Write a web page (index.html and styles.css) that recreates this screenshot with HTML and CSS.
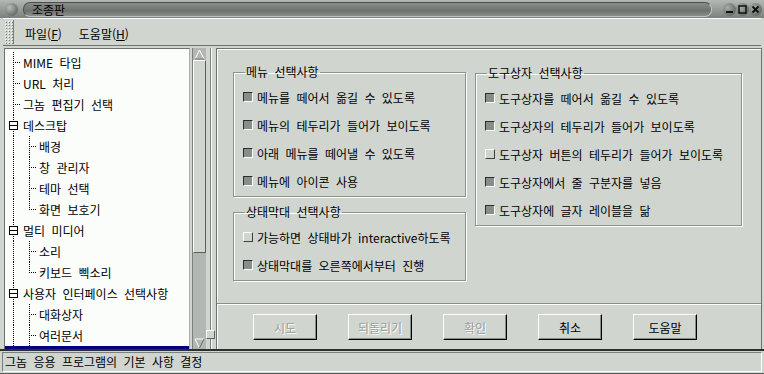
FILE: index.html
```html
<!DOCTYPE html>
<html lang="ko">
<head>
    <meta charset="UTF-8">
    <title>조종판</title>
    <link rel="stylesheet" href="styles.css">
</head>
<body>
<div class="window">

    <div class="titlebar">
        <span class="orb"></span>
        <div class="title-pill">조종판</div>
        <div class="wm-buttons">
            <span class="wm"><svg width="13" height="13" viewBox="0 0 13 13"><rect x="3" y="8" width="7" height="2" fill="#111"/></svg></span>
            <span class="wm"><svg width="13" height="13" viewBox="0 0 13 13"><rect x="3" y="3" width="7" height="7" fill="none" stroke="#111" stroke-width="1.5"/></svg></span>
            <span class="wm"><svg width="13" height="13" viewBox="0 0 13 13"><path d="M3.5 3.5 L9.5 9.5 M9.5 3.5 L3.5 9.5" stroke="#111" stroke-width="2"/></svg></span>
        </div>
    </div>

    <div class="menubar">
        <span class="handle"></span>
        <span class="menu-item">파일(<u>F</u>)</span>
        <span class="menu-item">도움말(<u>H</u>)</span>
    </div>

    <div class="main">
        <div class="tree">
            <div class="row"><span class="g tee"></span><span class="label">MIME 타입</span></div>
            <div class="row"><span class="g tee"></span><span class="label">URL 처리</span></div>
            <div class="row"><span class="g tee"></span><span class="label">그놈 편집기 선택</span></div>
            <div class="row"><span class="g box"><i></i></span><span class="label">데스크탑</span></div>
            <div class="row"><span class="g pass"></span><span class="g tee"></span><span class="label">배경</span></div>
            <div class="row"><span class="g pass"></span><span class="g tee"></span><span class="label">창 관리자</span></div>
            <div class="row"><span class="g pass"></span><span class="g tee"></span><span class="label">테마 선택</span></div>
            <div class="row"><span class="g pass"></span><span class="g corner"></span><span class="label">화면 보호기</span></div>
            <div class="row"><span class="g box"><i></i></span><span class="label">멀티 미디어</span></div>
            <div class="row"><span class="g pass"></span><span class="g tee"></span><span class="label">소리</span></div>
            <div class="row"><span class="g pass"></span><span class="g corner"></span><span class="label">키보드 삑소리</span></div>
            <div class="row"><span class="g box"><i></i></span><span class="label">사용자 인터페이스 선택사항</span></div>
            <div class="row"><span class="g pass"></span><span class="g tee"></span><span class="label">대화상자</span></div>
            <div class="row"><span class="g pass"></span><span class="g tee"></span><span class="label">여러문서</span></div>
            <div class="row selected"></div>
        </div>

        <div class="vscroll">
            <span class="arrow"><svg width="11" height="11" viewBox="0 0 11 11"><path d="M5.5 1 L10 10 L1 10 Z" fill="none" stroke="#fff"/><path d="M10 10 L1 10" stroke="#555"/></svg></span>
            <span class="thumb"></span>
            <span class="trough"></span>
            <span class="arrow"><svg width="11" height="11" viewBox="0 0 11 11"><path d="M1 1 L10 1 L5.5 10 Z" fill="none" stroke="#fff"/><path d="M10 1 L5.5 10" stroke="#555"/></svg></span>
        </div>

        <div class="gutter"><span class="grip"></span></div>

        <div class="pane">
            <div class="options">
                <div class="col col-left">
                    <fieldset class="group">
                        <legend>메뉴 선택사항</legend>
                        <div class="check"><span class="chk on"></span>메뉴를 떼어서 옮길 수 있도록</div>
                        <div class="check"><span class="chk on"></span>메뉴의 테두리가 들어가 보이도록</div>
                        <div class="check"><span class="chk on"></span>아래 메뉴를 떼어낼 수 있도록</div>
                        <div class="check"><span class="chk on"></span>메뉴에 아이콘 사용</div>
                    </fieldset>
                    <fieldset class="group status-group">
                        <legend>상태막대 선택사항</legend>
                        <div class="check"><span class="chk"></span>가능하면 상태바가 interactive하도록</div>
                        <div class="check"><span class="chk on"></span>상태막대를 오른쪽에서부터 진행</div>
                    </fieldset>
                </div>
                <div class="col col-right">
                    <fieldset class="group">
                        <legend>도구상자 선택사항</legend>
                        <div class="check"><span class="chk on"></span>도구상자를 떼어서 옮길 수 있도록</div>
                        <div class="check"><span class="chk on"></span>도구상자의 테두리가 들어가 보이도록</div>
                        <div class="check"><span class="chk"></span>도구상자 버튼의 테두리가 들어가 보이도록</div>
                        <div class="check"><span class="chk on"></span>도구상자에서 줄 구분자를 넣음</div>
                        <div class="check"><span class="chk on"></span>도구상자에 글자 레이블을 닮</div>
                    </fieldset>
                </div>
            </div>
            <div class="buttons">
                <button disabled>시도</button>
                <button disabled>되돌리기</button>
                <button disabled>확인</button>
                <button>취소</button>
                <button>도움말</button>
            </div>
        </div>
    </div>

    <div class="statusbar">
        <div class="status-text">그놈 응용 프로그램의 기본 사항 결정</div>
    </div>

</div>
</body>
</html>
```

FILE: styles.css
```css
body {
    margin: 0;
    background-color: #d1d5d0;
    color: #000;
    font-family: "Noto Sans CJK KR", sans-serif;
    font-size: 12px;
    word-spacing: 3px;
}
.window {
    width: 764px;
    height: 374px;
    display: flex;
    flex-direction: column;
    background-color: #d1d5d0;
    overflow: hidden;
}

/* title bar */
.titlebar {
    height: 18px;
    display: flex;
    align-items: center;
    gap: 5px;
    padding: 0 2px 0 5px;
    background: linear-gradient(#b4b8b4, #7c807c);
}
.orb {
    width: 13px;
    height: 13px;
    border-radius: 50%;
    background: radial-gradient(circle at 35% 35%, #b8bcb8, #4a4e4a);
}
.title-pill {
    flex: 1;
    height: 13px;
    line-height: 13px;
    padding-left: 8px;
    margin-right: 6px;
    border-radius: 7px;
    border-top: 1px solid #4c504c;
    border-left: 1px solid #4c504c;
    border-bottom: 1px solid #c0c4c0;
    border-right: 1px solid #c0c4c0;
    background: linear-gradient(#8a8e8a, #6e726e 60%, #8a8e8a);
    font-size: 12px;
}
.wm-buttons {
    display: flex;
}
.wm {
    width: 13px;
    height: 13px;
    border-radius: 50%;
    background: radial-gradient(circle at 35% 35%, #a8aca8, #505450);
}
.wm svg {
    display: block;
}

/* menu bar */
.menubar {
    height: 26px;
    display: flex;
    align-items: center;
    margin: 0 3px;
    border-top: 1px solid #fff;
    border-bottom: 1px solid #6e726e;
}
.handle {
    width: 9px;
    height: 24px;
    margin-left: 1px;
    border-right: 1px solid #7c807c;
    background-image: radial-gradient(#fff 0.6px, transparent 0.8px), radial-gradient(#7c807c 0.6px, transparent 0.8px);
    background-size: 3px 3px;
    background-position: 0 0, 1px 1px;
}
.menu-item {
    margin-left: 11px;
    margin-right: 7px;
    padding-top: 2px;
}
.menu-item + .menu-item {
    margin-left: 10px;
}

/* main area */
.main {
    height: 301px;
    display: flex;
    padding: 2px 2px 0 4px;
}
.tree {
    width: 184px;
    padding-top: 3px;
    background-color: #fbfdfb;
    border-top: 1px solid #6e726e;
    border-left: 1px solid #6e726e;
    border-right: 1px solid #a9ada9;
    overflow: hidden;
}
.row {
    height: 21px;
    display: flex;
    align-items: center;
    white-space: nowrap;
}
.row.selected {
    background-color: #000080;
}
.g {
    width: 16px;
    height: 21px;
    flex-shrink: 0;
    background-repeat: no-repeat;
}
.g.pass {
    background-image: repeating-linear-gradient(#000 0 1px, transparent 1px 2px);
    background-size: 1px 21px;
    background-position: 8px 0;
}
.g.tee {
    background-image: repeating-linear-gradient(#000 0 1px, transparent 1px 2px),
        repeating-linear-gradient(to right, #000 0 1px, transparent 1px 2px);
    background-size: 1px 21px, 7px 1px;
    background-position: 8px 0, 10px 10px;
}
.g.corner {
    background-image: repeating-linear-gradient(#000 0 1px, transparent 1px 2px),
        repeating-linear-gradient(to right, #000 0 1px, transparent 1px 2px);
    background-size: 1px 11px, 7px 1px;
    background-position: 8px 0, 10px 10px;
}
.g.box {
    display: flex;
    align-items: center;
    background-image: repeating-linear-gradient(#000 0 1px, transparent 1px 2px);
    background-size: 1px 21px;
    background-position: 8px 0;
}
.g.box i {
    width: 7px;
    height: 7px;
    margin-left: 4px;
    border: 1px solid #000;
    background: linear-gradient(#fbfdfb 3px, #000 3px 4px, #fbfdfb 4px);
}
.label {
    margin-left: 2px;
}

/* scrollbar */
.vscroll {
    width: 13px;
    margin-left: 2px;
    display: flex;
    flex-direction: column;
    background-color: #b3b7b3;
    border-left: 1px solid #7c807c;
}
.arrow {
    height: 12px;
    display: flex;
    justify-content: center;
    align-items: center;
}
.thumb {
    height: 191px;
    background-color: #d1d5d0;
    border-top: 1px solid #fff;
    border-left: 1px solid #fff;
    border-right: 1px solid #5c605c;
    border-bottom: 1px solid #5c605c;
}
.trough {
    flex: 1;
}

/* paned handle */
.gutter {
    width: 10px;
    display: flex;
    flex-direction: column;
    justify-content: flex-end;
    align-items: flex-end;
    padding-bottom: 10px;
    background-image: linear-gradient(to right, #7c807c, #7c807c), linear-gradient(to right, #fff, #fff);
    background-size: 1px 100%, 1px 100%;
    background-position: 4px 0, 5px 0;
    background-repeat: no-repeat;
}
.grip {
    width: 7px;
    height: 7px;
    margin-right: 1px;
    background-color: #d1d5d0;
    border-top: 1px solid #fff;
    border-left: 1px solid #fff;
    border-right: 1px solid #5c605c;
    border-bottom: 1px solid #5c605c;
}

/* right pane */
.pane {
    flex: 1;
    display: flex;
    flex-direction: column;
    border-top: 1px solid #6e726e;
    border-left: 1px solid #6e726e;
    border-right: 1px solid #6e726e;
    box-shadow: inset 1px 1px 0 #fff;
}
.options {
    height: 239px;
    display: flex;
    gap: 9px;
    padding: 15px 16px 0 16px;
    border-bottom: 1px solid #8a8e8a;
    box-shadow: 0 1px 0 #fff;
}
.col {
    display: flex;
    flex-direction: column;
}
.col-left {
    width: 233px;
}
.col-right {
    width: 267px;
    padding-top: 1px;
}
.group {
    margin: 0;
    padding: 3px 0 1px 9px;
    min-width: 0;
    border: 1px solid #8e928e;
    box-shadow: 1px 1px 0 #fff, inset 1px 1px 0 #fff;
}
.group legend {
    padding: 0 1px;
    margin-left: 2px;
    line-height: 16px;
}
.status-group {
    margin-top: 7px;
}
.check {
    height: 28px;
    display: flex;
    align-items: center;
    gap: 4px;
    white-space: nowrap;
}
.chk {
    width: 8px;
    height: 8px;
    background-color: #d1d5d0;
    border-top: 1px solid #fff;
    border-left: 1px solid #fff;
    border-right: 1px solid #3c403c;
    border-bottom: 1px solid #3c403c;
}
.chk.on {
    background-color: #8a8e8a;
    border-top: 1px solid #2c302c;
    border-left: 1px solid #2c302c;
    border-right: 1px solid #fff;
    border-bottom: 1px solid #fff;
}
.buttons {
    display: flex;
    gap: 31px;
    padding: 10px 0 0 36px;
}
.buttons button {
    width: 64px;
    height: 26px;
    padding: 0;
    font-family: inherit;
    font-size: 12px;
    word-spacing: 3px;
    color: #000;
    background-color: #d1d5d0;
    border-top: 1px solid #fff;
    border-left: 1px solid #fff;
    border-right: 1px solid #000;
    border-bottom: 1px solid #000;
    box-shadow: inset -1px -1px 0 #8a8e8a;
}
.buttons button:disabled {
    color: #9a9e9a;
    text-shadow: 1px 1px 0 #fff;
}

/* status bar */
.statusbar {
    flex: 1;
    padding: 1px 2px 1px 2px;
    border-top: 2px solid #2c302c;
    background-color: #d1d5d0;
    box-shadow: inset 0 -1px 0 #5c605c;
}
.status-text {
    height: 18px;
    line-height: 18px;
    padding-left: 2px;
    border-top: 1px solid #7c807c;
    border-left: 1px solid #7c807c;
    border-bottom: 1px solid #fff;
    border-right: 1px solid #fff;
    white-space: nowrap;
}
```
